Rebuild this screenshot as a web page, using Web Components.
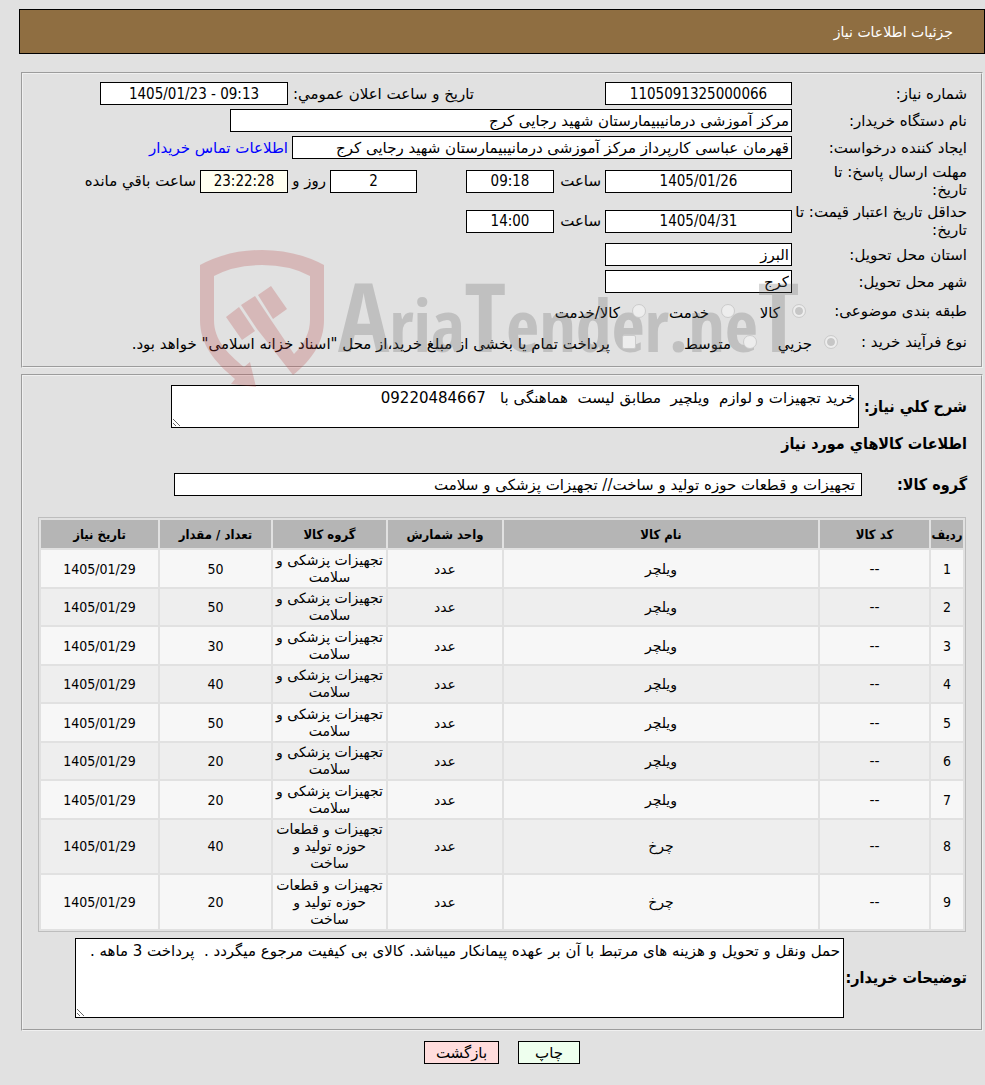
<!DOCTYPE html>
<html lang="fa" dir="rtl">
<head>
<meta charset="utf-8">
<title>جزئیات اطلاعات نیاز</title>
<style>
	body {
		margin: 0;
		background: #e1e1e1;
		color: #000;
		font-family: Tahoma, "DejaVu Sans", sans-serif;
		font-size: 15px;
		line-height: 18px;
		--narrow: Tahoma, "DejaVu Sans Condensed", "DejaVu Sans", sans-serif;
	}
</style>
</head>
<body>
<need-page>
	<page-banner>جزئیات اطلاعات نیاز</page-banner>
	<need-panel>
		<need-row>
			<need-field label="شماره نیاز:" value="1105091325000066" style="--box: 187px"></need-field>
			<need-field class="second" label="تاریخ و ساعت اعلان عمومي:" value="1405/01/23 - 09:13" style="--label: 182px; --box: 188px"></need-field>
		</need-row>
		<need-row>
			<need-field label="نام دستگاه خریدار:" value="مرکز آموزشی درمانیبیمارستان شهید رجایی کرج" class="words" style="--box: 562px"></need-field>
		</need-row>
		<need-row>
			<need-field label="ایجاد کننده درخواست:" value="قهرمان عباسی کارپرداز مرکز آموزشی درمانیبیمارستان شهید رجایی کرج" class="words" style="--box: 500px"></need-field>
			<a href="#contact">اطلاعات تماس خریدار</a>
		</need-row>
		<need-row class="tall">
			<need-field label="مهلت ارسال پاسخ: تا&#10;تاریخ:" value="1405/01/26" style="--box: 187px"></need-field>
			<need-field label="ساعت" value="09:18" style="--label: 43px; --box: 88px"></need-field>
			<need-field class="days" name="روز" value="2" style="--box: 87px"></need-field>
			<need-field label="روز و" value="23:22:28" style="--label: 34px; --box: 88px; --paper: #fffff0"></need-field>
			<span>ساعت باقي مانده</span>
		</need-row>
		<need-row class="tall">
			<need-field label="حداقل تاریخ اعتبار قیمت: تا&#10;تاریخ:" value="1405/04/31" style="--box: 187px"></need-field>
			<need-field label="ساعت" value="14:00" style="--label: 43px; --box: 88px"></need-field>
		</need-row>
		<need-row>
			<need-field label="استان محل تحویل:" value="البرز" class="words" style="--box: 187px"></need-field>
		</need-row>
		<need-row>
			<need-field label="شهر محل تحویل:" value="کرج" class="words" style="--box: 187px"></need-field>
		</need-row>
		<need-choices label="طبقه بندی موضوعی:" style="--label: 161px">
			<need-choice type="radio" name="subject" label="کالا" checked style="width: 71px"></need-choice>
			<need-choice type="radio" name="subject" label="خدمت" style="width: 89px"></need-choice>
			<need-choice type="radio" name="subject" label="کالا/خدمت"></need-choice>
		</need-choices>
		<need-choices label="نوع فرآیند خرید :" style="--label: 129px">
			<need-choice type="radio" name="process" label="جزیي" checked style="width: 81px"></need-choice>
			<need-choice type="radio" name="process" label="متوسط" style="width: 121px"></need-choice>
			<need-choice type="checkbox" name="treasury" label="پرداخت تمام یا بخشی از مبلغ خرید،از محل &quot;اسناد خزانه اسلامی&quot; خواهد بود."></need-choice>
		</need-choices>
	</need-panel>
	<need-panel class="goods">
		<need-area label="شرح کلي نیاز:" value="خرید تجهیزات و لوازم  ویلچیر  مطابق لیست  هماهنگی با   09220484667" style="--label: 104px; --box: 688px; --high: 43px"></need-area>
		<h2>اطلاعات کالاهاي مورد نیاز</h2>
		<need-field class="group words" label="گروه کالا:" value="تجهیزات و قطعات حوزه تولید و ساخت// تجهیزات پزشکی و سلامت" style="--label: 101px; --box: 688px; --indent: 6px"></need-field>
		<need-items></need-items>
		<need-area label="توضیحات خریدار:" value="حمل ونقل و تحویل و هزینه های مرتبط با آن بر عهده پیمانکار میباشد. کالای بی کیفیت مرجوع میگردد .  پرداخت 3 ماهه ." style="--label: 119px; --box: 769px; --high: 80px"></need-area>
	</need-panel>
	<need-button slot="actions" style="--fill: #eeffee; --wide: 62px">چاپ</need-button>
	<need-button slot="actions" style="--fill: #ffdddd; --wide: 75px">بازگشت</need-button>
	<site-mark></site-mark>
</need-page>

<script>
(function() {
	// attaches an open root and fills it
	function paint(host, html) {
		const template = document.createElement('template');
		template.innerHTML = html;
		host.attachShadow({ mode: 'open' }).appendChild(template.content.cloneNode(true));
		return host.shadowRoot;
	}

	class NeedPage extends HTMLElement {
		connectedCallback() {
			paint(this, `
			<style>
				:host {
					display: block;
					position: relative;
					padding: 9px 0 21px 0;
					margin-left: 19px;
				}
				footer {
					display: flex;
					justify-content: center;
					gap: 19px;
					margin-top: 10px;
				}
			</style>
			<slot></slot>
			<footer><slot name="actions"></slot></footer>`);
		}
	}

	class PageBanner extends HTMLElement {
		connectedCallback() {
			paint(this, `
			<style>
				:host {
					display: block;
					box-sizing: border-box;
					border: 1px solid #000;
					background: #8f6e41;
					color: #fff;
					padding: 14px 31px 12px;
					margin-bottom: 18px;
				}
				h1 { margin: 0; font-size: 14px; font-weight: normal; line-height: 17px; }
			</style>
			<h1><slot></slot></h1>`);
		}
	}

	class NeedPanel extends HTMLElement {
		connectedCallback() {
			paint(this, `
			<style>
				:host { display: block; margin: 0 2px 6px 2px; }
				:host(.goods) { margin-bottom: 0; }
				fieldset {
					margin: 0;
					min-width: 0;
					padding: 6px 14px 9px;
					border: 2px groove #f0f0f0;
				}
				:host(.goods) fieldset { padding: 9px 14px 11px; }
				::slotted(h2) {
					margin: 6px 0 20px;
					font-family: var(--narrow);
					font-size: 16px;
					line-height: 19px;
				}
				::slotted(need-items) { margin: 21px 1px 6px; }
			</style>
			<fieldset><slot></slot></fieldset>`);
		}
	}

	class NeedRow extends HTMLElement {
		connectedCallback() {
			paint(this, `
			<style>
				:host {
					display: flex;
					align-items: center;
					gap: 4px;
					height: 27px;
					white-space: nowrap;
				}
				:host(.tall) { height: 40px; }
				::slotted(a) { color: #0000ff; text-decoration: none; }
				::slotted(.second) { margin-right: 127px; }
				::slotted(.days) { margin-right: 45px; }
			</style>
			<slot></slot>`);
		}
	}

	class NeedField extends HTMLElement {
		connectedCallback() {
			const root = paint(this, `
			<style>
				:host { display: flex; align-items: center; gap: 4px; }
				label {
					flex: none;
					width: var(--label, 171px);
					white-space: pre;
				}
				:host(.group) label {
					font-family: var(--narrow);
					font-size: 16px;
					font-weight: bold;
				}
				input {
					box-sizing: border-box;
					width: var(--box);
					height: 23px;
					margin: 0;
					padding: 0 2px;
					padding-inline-start: var(--indent, 2px);
					border: 1px solid #000;
					background: var(--paper, #fff);
					color: #000;
					font-family: var(--narrow);
					font-size: 15px;
					text-align: center;
				}
				:host(.words) input { font-family: inherit; text-align: start; }
			</style>
			<label for="box"></label><input id="box" type="text" readonly>`);
			const label = root.querySelector('label');
			const input = root.querySelector('input');
			input.value = this.getAttribute('value');
			// dates and times read left to right
			input.dir = this.classList.contains('words') ? 'rtl' : 'ltr';
			if (this.hasAttribute('label')) {
				label.textContent = this.getAttribute('label');
			} else {
				label.remove();
				input.setAttribute('aria-label', this.getAttribute('name'));
			}
		}
	}

	class NeedArea extends HTMLElement {
		connectedCallback() {
			const root = paint(this, `
			<style>
				:host { display: flex; align-items: center; gap: 4px; }
				label {
					flex: none;
					width: var(--label);
					font-family: var(--narrow);
					font-size: 16px;
					font-weight: bold;
					white-space: nowrap;
				}
				textarea {
					box-sizing: border-box;
					width: var(--box);
					height: var(--high);
					margin: 0;
					padding: 3px;
					border: 1px solid #000;
					background: #fff;
					color: #000;
					font-family: inherit;
					font-size: 15px;
					line-height: 18px;
				}
			</style>
			<label for="text"></label><textarea id="text" readonly></textarea>`);
			root.querySelector('label').textContent = this.getAttribute('label');
			root.querySelector('textarea').value = this.getAttribute('value');
		}
	}

	class NeedChoices extends HTMLElement {
		connectedCallback() {
			const root = paint(this, `
			<style>
				:host { display: flex; align-items: center; height: 31px; }
				#caption { flex: none; width: var(--label); }
			</style>
			<span id="caption"></span><slot></slot>`);
			root.querySelector('#caption').textContent = this.getAttribute('label');
			this.setAttribute('role', 'group');
			this.setAttribute('aria-label', this.getAttribute('label'));
		}
	}

	class NeedChoice extends HTMLElement {
		connectedCallback() {
			const root = paint(this, `
			<style>
				:host {
					display: flex;
					align-items: center;
					gap: 12px;
					flex: none;
					white-space: nowrap;
				}
				input {
					appearance: none;
					box-sizing: border-box;
					position: relative;
					z-index: 2;
					width: 14px;
					height: 14px;
					margin: 0;
					border: 1px solid #cbcbcb;
					border-radius: 2px;
					background: #ededed;
				}
				input[type="radio"] { border-radius: 50%; }
				input[type="radio"]:checked {
					background: #c6c6c6;
					background-clip: content-box;
					padding: 2px;
					box-shadow: inset 0 0 0 2px #ededed;
				}
				label { padding-top: 5px; }
			</style>
			<input id="pick" disabled><label for="pick"></label>`);
			const input = root.querySelector('input');
			input.type = this.getAttribute('type');
			input.name = this.getAttribute('name');
			input.checked = this.hasAttribute('checked');
			root.querySelector('label').textContent = this.getAttribute('label');
		}
	}

	const medical = 'تجهیزات پزشکی و سلامت';
	const industry = 'تجهیزات و قطعات حوزه تولید و ساخت';
	const items = [
		['ویلچر', medical, 50],
		['ویلچر', medical, 50],
		['ویلچر', medical, 30],
		['ویلچر', medical, 40],
		['ویلچر', medical, 50],
		['ویلچر', medical, 20],
		['ویلچر', medical, 20],
		['چرخ', industry, 40],
		['چرخ', industry, 20],
	];

	class NeedItems extends HTMLElement {
		connectedCallback() {
			const rows = items.map(([name, group, count], i) => `
				<tr><td class="num">${i + 1}</td><td>--</td><td>${name}</td><td>عدد</td><td>${group}</td><td class="num">${count}</td><td class="num">1405/01/29</td></tr>`).join('');
			paint(this, `
			<style>
				:host { display: block; }
				table {
					width: 100%;
					table-layout: fixed;
					border: 1px solid #bdbdbd;
					border-collapse: separate;
					border-spacing: 2px;
					text-align: center;
					font-size: 14px;
					line-height: 17px;
				}
				th {
					height: 28px;
					padding: 0;
					background: #b5b5b5;
					font-size: 13px;
					white-space: nowrap;
				}
				th, .num { font-family: var(--narrow); }
				td { padding: 1px 2px; background: #eeeeee; }
				tbody tr:nth-child(odd) td { padding-top: 2px; background: #f7f7f7; }
			</style>
			<table>
				<colgroup>
					<col style="width: 32px"><col style="width: 109px"><col>
					<col style="width: 114px"><col style="width: 113px">
					<col style="width: 111px"><col style="width: 117px">
				</colgroup>
				<thead>
					<tr><th>ردیف</th><th>کد کالا</th><th>نام کالا</th><th>واحد شمارش</th><th>گروه کالا</th><th>تعداد / مقدار</th><th>تاریخ نیاز</th></tr>
				</thead>
				<tbody>${rows}</tbody>
			</table>`);
		}
	}

	class NeedButton extends HTMLElement {
		connectedCallback() {
			paint(this, `
			<style>
				:host { display: block; }
				button {
					box-sizing: border-box;
					width: var(--wide);
					height: 23px;
					padding: 0;
					border: 1px solid #000;
					background: var(--fill);
					color: #000;
					font-family: inherit;
					font-size: 15px;
					line-height: 18px;
				}
			</style>
			<button type="button"><slot></slot></button>`);
		}
	}

	// translucent shield with gavel and the site name, laid over the form
	class SiteMark extends HTMLElement {
		connectedCallback() {
			paint(this, `
			<style>
				:host {
					position: absolute;
					left: 181px;
					top: 250px;
					z-index: 1;
					pointer-events: none;
					direction: ltr;
				}
				svg { display: block; opacity: .25; }
				text {
					font-family: "Open Sans Condensed", "Roboto Condensed", "DejaVu Sans Condensed", sans-serif;
					font-weight: bold;
					font-size: 72px;
				}
				.big { font-size: 96px; }
			</style>
			<svg width="610" height="140" viewBox="0 0 610 140" aria-hidden="true">
				<g fill="#b94141">
					<path d="M0 15Q28 0 62 0T124 15V70C124 92 112 110 93 125L57 79L41 55L55 46L71 70L94 104Q110 88 110 70V26Q90 15 62 15T14 26V70C14 90 27 103 44 117L50 112L56 137L31 134L35 129C15 112 0 95 0 70Z"/>
					<path d="M26 67L39 57L55 81L42 90ZM58 45L71 36L87 59L73 69Z"/>
				</g>
				<text x="138" y="102" fill="#616161"><tspan class="big">A</tspan>ria<tspan class="big">T</tspan>ender.ne<tspan class="big">T</tspan></text>
			</svg>`);
		}
	}

	customElements.define('need-page', NeedPage);
	customElements.define('page-banner', PageBanner);
	customElements.define('need-panel', NeedPanel);
	customElements.define('need-row', NeedRow);
	customElements.define('need-field', NeedField);
	customElements.define('need-area', NeedArea);
	customElements.define('need-choices', NeedChoices);
	customElements.define('need-choice', NeedChoice);
	customElements.define('need-items', NeedItems);
	customElements.define('need-button', NeedButton);
	customElements.define('site-mark', SiteMark);
})();
</script>
</body>
</html>
